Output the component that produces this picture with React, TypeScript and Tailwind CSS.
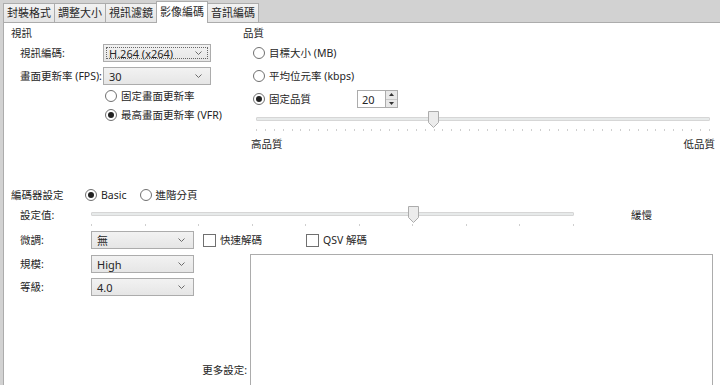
const tabs = ["封裝格式", "調整大小", "視訊濾鏡", "影像編碼", "音訊編碼"];

function Chevron() {
  return (
    <svg width="7" height="4" viewBox="0 0 7 4" className="shrink-0">
      <path d="M0.5 0.5 L3.5 3.5 L6.5 0.5" fill="none" stroke="#6b6b6b" strokeWidth="1" />
    </svg>
  );
}

function Select({ value, width, focus }: { value: string; width: number; focus?: boolean }) {
  return (
    <div
      className="relative flex h-[18px] shrink-0 items-center justify-between border border-[#acacac] bg-gradient-to-b from-[#f2f2f2] to-[#e6e6e6] pl-[5px] pr-[8px]"
      style={{ width }}
    >
      {focus && <div className="absolute inset-[2px] border border-dotted border-[#666]" />}
      <span className="whitespace-nowrap text-[11px] leading-none">{value}</span>
      <Chevron />
    </div>
  );
}

function Radio({ checked, label }: { checked?: boolean; label: string }) {
  return (
    <div className="flex h-[16px] items-center">
      <div className="flex h-[12px] w-[12px] shrink-0 items-center justify-center rounded-full border border-[#707070] bg-white">
        {checked && <div className="h-[6px] w-[6px] rounded-full bg-[#222]" />}
      </div>
      <span className="ml-[4px] whitespace-nowrap leading-none">{label}</span>
    </div>
  );
}

function Check({ label }: { label: string }) {
  return (
    <div className="flex h-[16px] items-center">
      <div className="h-[13px] w-[13px] shrink-0 border border-[#707070] bg-white" />
      <span className="ml-[4px] whitespace-nowrap leading-none">{label}</span>
    </div>
  );
}

function Thumb() {
  return (
    <svg width="11" height="17" viewBox="0 0 11 17">
      <path d="M0.5 0.5 H10.5 V11.5 L5.5 16.5 L0.5 11.5 Z" fill="#ececec" stroke="#acacac" />
    </svg>
  );
}

function Slider({ width, pos, ticks }: { width: number; pos: number; ticks: number }) {
  return (
    <div className="shrink-0" style={{ width }}>
      <div className="relative h-[17px]">
        <div className="absolute left-0 right-0 top-[6px] h-[4px] rounded-[1px] border border-[#d6d6d6] bg-[#e7eaea]" />
        <div className="absolute top-0" style={{ left: pos - 5 }}>
          <Thumb />
        </div>
      </div>
      <div className="mt-[1px] flex h-[2px] justify-between">
        {Array.from({ length: ticks }).map((_, i) => (
          <div key={i} className="h-[2px] w-[1px] bg-[#cfcfcf]" />
        ))}
      </div>
    </div>
  );
}

export default function App() {
  return (
    <div className="h-[385px] w-[720px] overflow-hidden bg-[#d2d2d2] font-['Noto_Sans','Noto_Sans_CJK_TC',sans-serif] text-[10.5px] text-[#262626]">
      <div className="flex h-[22px] items-end pl-[3px] text-[11px]">
        {tabs.map((t, i) =>
          i === 3 ? (
            <div
              key={t}
              className="relative z-10 -mb-px -ml-px flex h-[22px] w-[52px] items-center justify-center border border-b-0 border-[#acacac] bg-white"
            >
              {t}
            </div>
          ) : (
            <div
              key={t}
              className={`flex h-[19px] w-[52px] items-center justify-center border border-b-0 border-[#acacac] bg-gradient-to-b from-[#f2f2f2] to-[#e5e5e5] ${i > 0 ? "-ml-px" : ""}`}
            >
              {t}
            </div>
          )
        )}
      </div>
      <div className="ml-[3px] h-[363px] border-l border-t border-[#acacac] bg-white">
        <div className="flex">
          <div className="w-[239px] shrink-0 pl-[7px]">
            <div className="mt-[3px] h-[14px] leading-[14px]">視訊</div>
            <div className="mt-[4px] flex items-center pl-[9px]">
              <span className="w-[83px] whitespace-nowrap leading-none">視訊編碼:</span>
              <Select value="H.264 (x264)" width={108} focus />
            </div>
            <div className="mt-[5px] flex items-center pl-[9px]">
              <span className="w-[83px] whitespace-nowrap leading-none">畫面更新率 (FPS):</span>
              <Select value="30" width={108} />
            </div>
            <div className="mt-[3px] pl-[94px]">
              <Radio label="固定畫面更新率" />
              <div className="mt-[3px]">
                <Radio checked label="最高畫面更新率 (VFR)" />
              </div>
            </div>
          </div>
          <div className="flex-1">
            <div className="mt-[3px] h-[14px] leading-[14px]">品質</div>
            <div className="pl-[10px]">
              <div className="mt-[5px]">
                <Radio label="目標大小 (MB)" />
              </div>
              <div className="mt-[7px]">
                <Radio label="平均位元率 (kbps)" />
              </div>
              <div className="mt-[6px] flex h-[18px] items-center">
                <div className="w-[104px]">
                  <Radio checked label="固定品質" />
                </div>
                <div className="flex h-[18px] w-[41px] items-center border border-[#acacac] bg-white pl-[4px]">
                  <span className="flex-1 text-[11px] leading-none">20</span>
                  <div className="flex h-full w-[12px] flex-col border-l border-[#acacac]">
                    <div className="flex flex-1 items-center justify-center border-b border-[#c8c8c8] bg-[#e8e8e8]">
                      <svg width="5" height="3" viewBox="0 0 5 3">
                        <path d="M0 3 L2.5 0 L5 3 Z" fill="#333" />
                      </svg>
                    </div>
                    <div className="flex flex-1 items-center justify-center bg-[#e8e8e8]">
                      <svg width="5" height="3" viewBox="0 0 5 3">
                        <path d="M0 0 L2.5 3 L5 0 Z" fill="#333" />
                      </svg>
                    </div>
                  </div>
                </div>
              </div>
            </div>
            <div className="mt-[3px] pl-[13px]">
              <Slider width={454} pos={177} ticks={52} />
            </div>
            <div className="mt-[6px] flex w-[472px] justify-between pl-[8px] leading-[14px]">
              <span>高品質</span>
              <span>低品質</span>
            </div>
          </div>
        </div>

        <div className="mt-[37px] flex h-[14px] items-center pl-[7px]">
          <span className="w-[74px] leading-none">編碼器設定</span>
          <Radio checked label="Basic" />
          <div className="ml-[13px]">
            <Radio label="進階分頁" />
          </div>
        </div>
        <div className="mt-[4px] flex pl-[16px]">
          <span className="mt-[2px] w-[71px] leading-[14px]">設定值:</span>
          <Slider width={483} pos={322} ticks={10} />
          <span className="ml-[57px] mt-[2px] leading-[14px]">緩慢</span>
        </div>
        <div className="mt-[5px] flex items-center pl-[16px]">
          <span className="w-[71px] leading-none">微調:</span>
          <Select value="無" width={103} />
          <div className="ml-[9px] w-[103px]">
            <Check label="快速解碼" />
          </div>
          <Check label="QSV 解碼" />
        </div>
        <div className="mt-[5px] flex">
          <div className="flex w-[246px] shrink-0 flex-col pl-[16px] pt-[1px]">
            <div className="flex items-center">
              <span className="w-[71px] leading-none">規模:</span>
              <Select value="High" width={103} />
            </div>
            <div className="mt-[5px] flex items-center">
              <span className="w-[71px] leading-none">等級:</span>
              <Select value="4.0" width={103} />
            </div>
            <div className="mt-[67px] pr-[3px] text-right leading-[14px]">更多設定:</div>
          </div>
          <div className="mr-[7px] h-[150px] flex-1 border border-[#acacac] bg-white" />
        </div>
      </div>
    </div>
  );
}
